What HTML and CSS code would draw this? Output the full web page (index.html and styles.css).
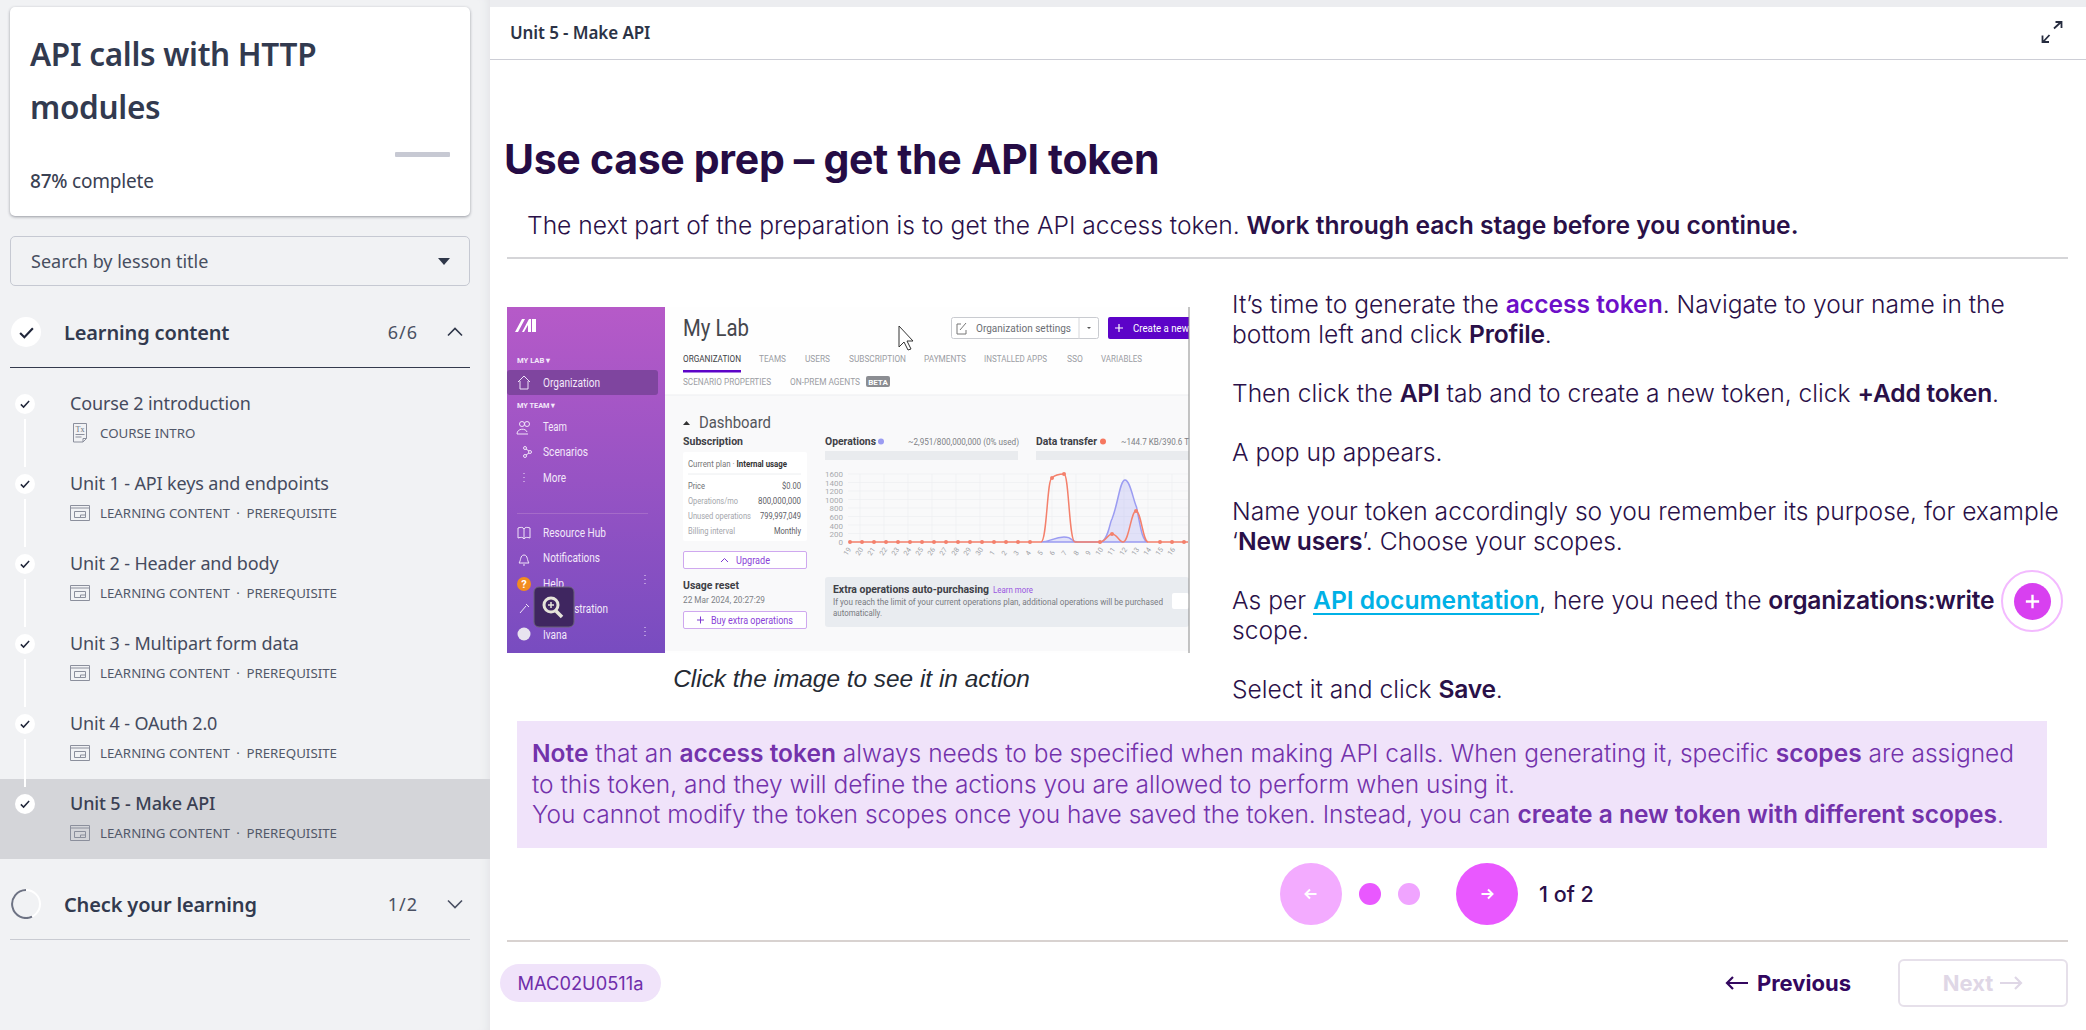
FILE: index.html
```html
<!DOCTYPE html>
<html lang="en">
<head>
<meta charset="utf-8">
<title>Use case prep - get the API token</title>
<link rel="stylesheet" href="styles.css">
</head>
<body>
<div class="app">
  <aside class="sidebar">
    <section class="course-card">
      <h1 class="course-title">API calls with HTTP modules</h1>
      <div class="progress"><span class="progress-rest"></span></div>
      <p class="progress-label"><b>87%</b> complete</p>
    </section>
    <div class="search"><span>Search by lesson title</span><i class="caret"></i></div>

    <div class="section-head">
      <span class="big-check"><svg viewBox="0 0 16 16" class="check-lg"><path d="M2 8.5l4 4 8-8.5"/></svg></span>
      <span class="section-title">Learning content</span>
      <span class="section-count">6/6</span>
      <svg class="chev" viewBox="0 0 16 10"><path d="M1 8.5l7-7 7 7"/></svg>
    </div>

    <ul class="lessons">
      <li class="lesson">
        <span class="small-check"><svg viewBox="0 0 16 16"><path d="M2.5 8.5l3.6 3.6 7.4-8"/></svg></span>
        <div class="lesson-body">
          <div class="lesson-title">Course 2 introduction</div>
          <div class="lesson-meta">
            <svg class="meta-icon doc" viewBox="0 0 20 20"><path d="M3.500 .500h13v15l-3.500 3.500h-9.500z M5.500 11.500h9 M5.500 14h6 M16.500 15.500h-3.500v3.500"/><text x="5.500" y="8.500" class="tx">Tx</text></svg>
            <span>COURSE INTRO</span>
          </div>
        </div>
      </li>
      <li class="lesson">
        <span class="small-check"><svg viewBox="0 0 16 16"><path d="M2.5 8.5l3.6 3.6 7.4-8"/></svg></span>
        <div class="lesson-body">
          <div class="lesson-title">Unit 1 - API keys and endpoints</div>
          <div class="lesson-meta">
            <svg class="meta-icon" viewBox="0 0 20 16"><path d="M.5.500h19v15h-19z M.5 3h19"/><path d="M4.500 6.500h11v6h-11z M10.500 12.500v-2.500h5"/></svg>
            <span>LEARNING CONTENT <i class="sep">·</i> PREREQUISITE</span>
          </div>
        </div>
      </li>
      <li class="lesson">
        <span class="small-check"><svg viewBox="0 0 16 16"><path d="M2.5 8.5l3.6 3.6 7.4-8"/></svg></span>
        <div class="lesson-body">
          <div class="lesson-title">Unit 2 - Header and body</div>
          <div class="lesson-meta">
            <svg class="meta-icon" viewBox="0 0 20 16"><path d="M.5.500h19v15h-19z M.5 3h19"/><path d="M4.500 6.500h11v6h-11z M10.500 12.500v-2.500h5"/></svg>
            <span>LEARNING CONTENT <i class="sep">·</i> PREREQUISITE</span>
          </div>
        </div>
      </li>
      <li class="lesson">
        <span class="small-check"><svg viewBox="0 0 16 16"><path d="M2.5 8.5l3.6 3.6 7.4-8"/></svg></span>
        <div class="lesson-body">
          <div class="lesson-title">Unit 3 - Multipart form data</div>
          <div class="lesson-meta">
            <svg class="meta-icon" viewBox="0 0 20 16"><path d="M.5.500h19v15h-19z M.5 3h19"/><path d="M4.500 6.500h11v6h-11z M10.500 12.500v-2.500h5"/></svg>
            <span>LEARNING CONTENT <i class="sep">·</i> PREREQUISITE</span>
          </div>
        </div>
      </li>
      <li class="lesson">
        <span class="small-check"><svg viewBox="0 0 16 16"><path d="M2.5 8.5l3.6 3.6 7.4-8"/></svg></span>
        <div class="lesson-body">
          <div class="lesson-title">Unit 4 - OAuth 2.0</div>
          <div class="lesson-meta">
            <svg class="meta-icon" viewBox="0 0 20 16"><path d="M.5.500h19v15h-19z M.5 3h19"/><path d="M4.500 6.500h11v6h-11z M10.500 12.500v-2.500h5"/></svg>
            <span>LEARNING CONTENT <i class="sep">·</i> PREREQUISITE</span>
          </div>
        </div>
      </li>
      <li class="lesson active">
        <span class="small-check"><svg viewBox="0 0 16 16"><path d="M2.5 8.5l3.6 3.6 7.4-8"/></svg></span>
        <div class="lesson-body">
          <div class="lesson-title">Unit 5 - Make API</div>
          <div class="lesson-meta">
            <svg class="meta-icon" viewBox="0 0 20 16"><path d="M.5.500h19v15h-19z M.5 3h19"/><path d="M4.500 6.500h11v6h-11z M10.500 12.500v-2.500h5"/></svg>
            <span>LEARNING CONTENT <i class="sep">·</i> PREREQUISITE</span>
          </div>
        </div>
      </li>
    </ul>

    <div class="section-head second">
      <svg class="spinner" viewBox="0 0 30 30"><circle cx="15" cy="15" r="14" class="spin-bg"/><path d="M21 27.700A14 14 0 1 1 15 1" class="spin-fg"/></svg>
      <span class="section-title">Check your learning</span>
      <span class="section-count">1/2</span>
      <svg class="chev" viewBox="0 0 16 10"><path d="M1 1.500l7 7 7-7"/></svg>
    </div>
  </aside>

  <main class="main">
    <header class="topbar">
      <span class="unit-name">Unit 5 - Make API</span>
      <svg class="expand" viewBox="0 0 22 22"><path d="M13 7.500L20 1 M14.500 1H20.500V7 M8.500 14L2 21 M1.500 14.500V21H8"/></svg>
    </header>

    <div class="content">
      <h2 class="page-title">Use case prep – get the API token</h2>
      <p class="intro">The next part of the preparation is to get the API access token. <strong>Work through each stage before you continue.</strong></p>
      <hr class="rule">

      <div class="columns">
        <figure class="figure">
          <svg class="shot" viewBox="507 308 684 346" role="img">
            <defs>
              <linearGradient id="side" x1="0" y1="0" x2="0" y2="1"><stop offset="0" stop-color="#b65ac8"/><stop offset="1" stop-color="#784cc0"/></linearGradient>
            </defs>
            <rect x="507" y="308" width="682" height="346" fill="#fefefe"/>
            <rect x="664" y="396" width="525" height="256" fill="#f9f9fa"/>
            <rect x="507" y="308" width="158" height="346" fill="url(#side)"/>
            <path d="M515 333l7-13h3l-7 13z M522 333l7-13h2v13h-3v-7l-4 7z M532 320h4v13h-4z" fill="#fff"/>
            <g class="s-side">
              <text x="517" y="364" class="s-cap" textLength="33" lengthAdjust="spacingAndGlyphs">MY LAB ▾</text>
              <rect x="507" y="371" width="151" height="25" rx="3" fill="#7f459f"/>
              <text x="543" y="388" textLength="57" lengthAdjust="spacingAndGlyphs">Organization</text>
              <text x="517" y="409" class="s-cap" textLength="38" lengthAdjust="spacingAndGlyphs">MY TEAM ▾</text>
              <text x="543" y="432" textLength="24" lengthAdjust="spacingAndGlyphs">Team</text>
              <text x="543" y="457" textLength="45" lengthAdjust="spacingAndGlyphs">Scenarios</text>
              <text x="543" y="483" textLength="23" lengthAdjust="spacingAndGlyphs">More</text>
              <text x="543" y="538" textLength="63" lengthAdjust="spacingAndGlyphs">Resource Hub</text>
              <text x="543" y="563" textLength="57" lengthAdjust="spacingAndGlyphs">Notifications</text>
              <text x="543" y="589" textLength="21" lengthAdjust="spacingAndGlyphs">Help</text>
              <text x="543" y="614" textLength="65" lengthAdjust="spacingAndGlyphs">Administration</text>
              <text x="543" y="640" textLength="24" lengthAdjust="spacingAndGlyphs">Ivana</text>
            </g>
            <g class="s-ic">
              <path d="M518 383l6-6 6 6M520 382v8h8v-8"/>
              <circle cx="522" cy="425" r="2.500"/><circle cx="527" cy="425" r="2.500"/><path d="M517 435c0-6 9-6 10-2M528 435h-11"/>
              <circle cx="525" cy="449" r="1.500"/><circle cx="530" cy="453" r="1.500"/><circle cx="525" cy="457" r="1.500"/><path d="M526 450l3 2M526 456l3-2"/>
              <path d="M524 474v1M524 478v1M524 482v1"/>
              <path d="M518 529c3-1 5-1 6 1 1-2 3-2 6-1v10c-3-1-5-1-6 1-1-2-3-2-6-1zM524 530v10"/>
              <path d="M519 564c2-2 1-8 5-8s3 6 5 8zM523 566h2"/>
              <path d="M520 614l6-7M526 605l3 3"/>
              <path d="M645 576v1M645 580v1M645 584v1M645 628v1M645 632v1M645 636v1"/>
            </g>
            <rect x="517" y="514" width="131" height="1" fill="#a56bc9"/>
            <circle cx="524" cy="585" r="7" fill="#f28c1f"/><text x="524" y="589" class="s-q">?</text>
            <circle cx="524" cy="635" r="6.500" fill="#e8e3ef"/>
            <rect x="534" y="588" width="40" height="40" rx="5" fill="#3f2660" stroke="#6a6378"/>
            <circle cx="551" cy="606" r="7" fill="none" stroke="#e6e4da" stroke-width="3"/>
            <path d="M556 612l6 6" stroke="#e6e4da" stroke-width="3.500"/>
            <path d="M548 606h6M551 603v6" stroke="#e6e4da" stroke-width="1.500"/>

            <text x="683" y="337" class="s-h1" textLength="66" lengthAdjust="spacingAndGlyphs">My Lab</text>
            <path d="M899 327v21l5-5 4 8 3-1-4-8h6z" fill="#fff" stroke="#333" stroke-width="1"/>
            <rect x="951.500" y="318.500" width="147" height="21" rx="2" fill="#fff" stroke="#c9cbd0"/>
            <path d="M1079 319v21" stroke="#d5d6da"/>
            <path d="M1087 328l2 2 2-2z" fill="#555"/>
            <path d="M961 325h-4v10h9v-4M960 331l6-7" fill="none" stroke="#777"/>
            <text x="976" y="333" class="s-btn" textLength="95" lengthAdjust="spacingAndGlyphs">Organization settings</text>
            <path d="M1108 320a2 2 0 0 1 2-2h79v22h-79a2 2 0 0 1-2-2z" fill="#5c03c8"/>
            <path d="M1115 329h8M1119 325v8" stroke="#fff" stroke-width="1.200"/>
            <text x="1133" y="333" class="s-btn white" textLength="56" lengthAdjust="spacingAndGlyphs">Create a new</text>

            <g class="s-tab">
              <text x="683" y="363" class="dark" textLength="58" lengthAdjust="spacingAndGlyphs">ORGANIZATION</text>
              <text x="759" y="363" textLength="27" lengthAdjust="spacingAndGlyphs">TEAMS</text>
              <text x="805" y="363" textLength="25" lengthAdjust="spacingAndGlyphs">USERS</text>
              <text x="849" y="363" textLength="57" lengthAdjust="spacingAndGlyphs">SUBSCRIPTION</text>
              <text x="924" y="363" textLength="42" lengthAdjust="spacingAndGlyphs">PAYMENTS</text>
              <text x="984" y="363" textLength="63" lengthAdjust="spacingAndGlyphs">INSTALLED APPS</text>
              <text x="1067" y="363" textLength="16" lengthAdjust="spacingAndGlyphs">SSO</text>
              <text x="1101" y="363" textLength="41" lengthAdjust="spacingAndGlyphs">VARIABLES</text>
              <text x="683" y="386" textLength="88" lengthAdjust="spacingAndGlyphs">SCENARIO PROPERTIES</text>
              <text x="790" y="386" textLength="70" lengthAdjust="spacingAndGlyphs">ON-PREM AGENTS</text>
            </g>
            <rect x="683" y="371" width="58" height="2.500" fill="#5c03c8"/>
            <rect x="866" y="377" width="24" height="11" rx="2" fill="#8b8d92"/>
            <text x="878" y="386" class="s-beta">BETA</text>
            <path d="M665 396h524" stroke="#eeeff1"/>

            <path d="M683 426l3.500-4 3.500 4z" fill="#333"/>
            <text x="699" y="429" class="s-h2" textLength="72" lengthAdjust="spacingAndGlyphs">Dashboard</text>

            <g class="s-b">
              <text x="683" y="446" textLength="60" lengthAdjust="spacingAndGlyphs">Subscription</text>
              <text x="825" y="446" textLength="51" lengthAdjust="spacingAndGlyphs">Operations</text>
              <text x="1036" y="446" textLength="61" lengthAdjust="spacingAndGlyphs">Data transfer</text>
              <text x="683" y="590" textLength="56" lengthAdjust="spacingAndGlyphs">Usage reset</text>
            </g>
            <circle cx="881" cy="442.500" r="3" fill="#9b9cf2"/>
            <circle cx="1103" cy="442.500" r="3" fill="#f6775f"/>
            <text x="908" y="446" class="s-t" textLength="111" lengthAdjust="spacingAndGlyphs">~2,951/800,000,000 (0% used)</text>
            <text x="1121" y="446" class="s-t" textLength="68" lengthAdjust="spacingAndGlyphs">~144.7 KB/390.6 T</text>
            <rect x="825" y="452" width="193" height="9" fill="#e9ebee"/>
            <rect x="1036" y="452" width="153" height="9" fill="#e9ebee"/>

            <rect x="683" y="453" width="124" height="89" rx="2" fill="#fff"/>
            <text x="688" y="468" class="s-t8" textLength="99" lengthAdjust="spacingAndGlyphs">Current plan · <tspan class="bold">Internal usage</tspan></text>
            <path d="M688 475h113" stroke="#eceef0"/>
            <g class="s-t8 dim">
              <text x="688" y="490" class="darker" textLength="17" lengthAdjust="spacingAndGlyphs">Price</text>
              <text x="688" y="505" textLength="50" lengthAdjust="spacingAndGlyphs">Operations/mo</text>
              <text x="688" y="520" textLength="63" lengthAdjust="spacingAndGlyphs">Unused operations</text>
              <text x="688" y="535" textLength="47" lengthAdjust="spacingAndGlyphs">Billing interval</text>
            </g>
            <g class="s-t8 end">
              <text x="801" y="490" textLength="19" lengthAdjust="spacingAndGlyphs">$0.00</text>
              <text x="801" y="505" textLength="43" lengthAdjust="spacingAndGlyphs">800,000,000</text>
              <text x="801" y="520" textLength="41" lengthAdjust="spacingAndGlyphs">799,997,049</text>
              <text x="801" y="535" textLength="27" lengthAdjust="spacingAndGlyphs">Monthly</text>
            </g>
            <rect x="683.500" y="552.500" width="123" height="17" rx="1.500" fill="#fff" stroke="#cfa8ef"/>
            <path d="M721 563l3.500-3.500 3.500 3.500" fill="none" stroke="#7d3ad0"/>
            <text x="736" y="565" class="s-p" textLength="34" lengthAdjust="spacingAndGlyphs">Upgrade</text>
            <text x="683" y="604" class="s-t" textLength="82" lengthAdjust="spacingAndGlyphs">22 Mar 2024, 20:27:29</text>
            <rect x="683.500" y="612.500" width="123" height="17" rx="1.500" fill="#fff" stroke="#cfa8ef"/>
            <path d="M697 621h7M700.500 617.500v7" stroke="#7d3ad0"/>
            <text x="711" y="625" class="s-p" textLength="82" lengthAdjust="spacingAndGlyphs">Buy extra operations</text>

            <g class="s-axis">
              <text x="843" y="478">1600</text><text x="843" y="487">1400</text><text x="843" y="495">1200</text><text x="843" y="504">1000</text><text x="843" y="512">800</text><text x="843" y="521">600</text><text x="843" y="530">400</text><text x="843" y="538">200</text><text x="843" y="546">0</text>
            </g>
            <path class="s-grid" d="M848 475h340M848 483.500h340M848 492h340M848 500.500h340M848 509h340M848 517.500h340M848 526h340M848 534.500h340M848 543h340M860 475v68M884 475v68M908 475v68M932 475v68M956 475v68M980 475v68M1004 475v68M1028 475v68M1052 475v68M1076 475v68M1100 475v68M1124 475v68M1148 475v68M1172 475v68"/>
            <path d="M1041 543C1050 543 1054 538 1064 538S1070 543 1078 543H1100C1108 543 1110 522 1112 520 1118 505 1120 481 1125 481 1130 481 1133 500 1136.500 508 1140 525 1142 543 1148 543Z" fill="#9b9cf2" fill-opacity=".25" stroke="#9b9cf2" stroke-width="1.500"/>
            <path d="M850 543H1041C1047 543 1047 479 1052 479 1056 475 1060 475 1064 475 1069 475 1069 543 1075 543H1100C1105 543 1108 535 1112 535 1117 535 1119 543 1123 543 1129 543 1131 512 1136 512 1141 512 1143 543 1148 543H1188" fill="none" stroke="#f4806c" stroke-width="1.500"/>
            <path class="s-dots" d="M850 543h.01M862 543h.01M874 543h.01M886 543h.01M898 543h.01M910 543h.01M922 543h.01M934 543h.01M946 543h.01M958 543h.01M970 543h.01M982 543h.01M994 543h.01M1006 543h.01M1018 543h.01M1030 543h.01M1052 479h.01M1064 475h.01M1100 543h.01M1112 535h.01M1136 512h.01M1160 543h.01M1172 543h.01M1184 543h.01"/>
            <g class="s-x">
              <text transform="translate(847 557) rotate(-55)">19</text><text transform="translate(859 557) rotate(-55)">20</text><text transform="translate(871 557) rotate(-55)">21</text><text transform="translate(883 557) rotate(-55)">22</text><text transform="translate(895 557) rotate(-55)">23</text><text transform="translate(907 557) rotate(-55)">24</text><text transform="translate(919 557) rotate(-55)">25</text><text transform="translate(931 557) rotate(-55)">26</text><text transform="translate(943 557) rotate(-55)">27</text><text transform="translate(955 557) rotate(-55)">28</text><text transform="translate(967 557) rotate(-55)">29</text><text transform="translate(979 557) rotate(-55)">30</text><text transform="translate(993 557) rotate(-55)">1</text><text transform="translate(1005 557) rotate(-55)">2</text><text transform="translate(1017 557) rotate(-55)">3</text><text transform="translate(1029 557) rotate(-55)">4</text><text transform="translate(1041 557) rotate(-55)">5</text><text transform="translate(1053 557) rotate(-55)">6</text><text transform="translate(1065 557) rotate(-55)">7</text><text transform="translate(1077 557) rotate(-55)">8</text><text transform="translate(1089 557) rotate(-55)">9</text><text transform="translate(1099 557) rotate(-55)">10</text><text transform="translate(1111 557) rotate(-55)">11</text><text transform="translate(1123 557) rotate(-55)">12</text><text transform="translate(1135 557) rotate(-55)">13</text><text transform="translate(1147 557) rotate(-55)">14</text><text transform="translate(1159 557) rotate(-55)">15</text><text transform="translate(1171 557) rotate(-55)">16</text>
            </g>

            <rect x="825" y="578" width="364" height="50" rx="3" fill="#e9ecf0"/>
            <g class="s-b"><text x="833" y="594" textLength="156" lengthAdjust="spacingAndGlyphs">Extra operations auto-purchasing</text></g>
            <text x="993" y="594" class="s-link" textLength="40" lengthAdjust="spacingAndGlyphs">Learn more</text>
            <text x="833" y="606" class="s-t9" textLength="330" lengthAdjust="spacingAndGlyphs">If you reach the limit of your current operations plan, additional operations will be purchased</text>
            <text x="833" y="617" class="s-t9" textLength="49" lengthAdjust="spacingAndGlyphs">automatically.</text>
            <rect x="1172" y="594" width="17" height="16" rx="2" fill="#fff"/>
            <path d="M1189 308v346" stroke="#8a8a8a" stroke-width="1"/>
          </svg>
          <figcaption class="caption">Click the image to see it in action</figcaption>
        </figure>

        <div class="steps">
          <p>It’s time to generate the <a class="term">access token</a>. Navigate to your name in the bottom left and click <strong>Profile</strong>.</p>
          <p>Then click the <strong>API</strong> tab and to create a new token, click <strong>+Add token</strong>.</p>
          <p>A pop up appears.</p>
          <p>Name your token accordingly so you remember its purpose, for example ‘<strong>New users</strong>’. Choose your scopes.</p>
          <p>As per <a class="doc-link">API documentation</a>, here you need the <strong>organizations:write</strong> scope.</p>
          <p>Select it and click <strong>Save</strong>.</p>
          <button class="hotspot" aria-label="More"><svg viewBox="0 0 20 20"><path d="M10 3v14M3 10h14"/></svg></button>
        </div>
      </div>

      <aside class="note">
        <p><strong>Note</strong> that an <strong>access token</strong> always needs to be specified when making API calls. When generating it, specific <strong>scopes</strong> are assigned to this token, and they will define the actions you are allowed to perform when using it.<br>You cannot modify the token scopes once you have saved the token. Instead, you can <strong>create a new token with different scopes</strong>.</p>
      </aside>

      <nav class="pager">
        <span class="round faded"><svg viewBox="0 0 16 16"><path d="M13.500 8h-11M7 3.500L2.500 8 7 12.500"/></svg></span>
        <span class="dot on"></span>
        <span class="dot"></span>
        <span class="round"><svg viewBox="0 0 16 16"><path d="M2.500 8h11M9 3.500L13.500 8 9 12.500"/></svg></span>
        <span class="page-count">1 of 2</span>
      </nav>
      <hr class="rule lower">

      <footer class="foot">
        <span class="code">MAC02U0511a</span>
        <a class="prev"><svg class="arrow" viewBox="0 0 24 16"><path d="M23 8H2M8 2L2 8l6 6"/></svg>Previous</a>
        <a class="next">Next<svg class="arrow" viewBox="0 0 24 16"><path d="M1 8h21M16 2l6 6-6 6"/></svg></a>
      </footer>
    </div>
  </main>
</div>
</body>
</html>
```
FILE: styles.css
```css
* { box-sizing: border-box; }
html, body { margin: 0; height: 100%; }
body { background: #ecedf0; overflow: hidden; font-family: "Inter", "Liberation Sans", sans-serif; }
.app { display: flex; height: 1030px; width: 2086px; }

/* Sidebar */
.sidebar {
  width: 490px; flex: none; padding-top: 7px; background: #f1f2f4;
  font-family: "Noto Sans", "Liberation Sans", sans-serif; color: #2f3749;
  box-shadow: inset -10px 0 10px -8px #e2e3e6;
}
.course-card {
  margin: 0 10px 0; width: 460px; height: 209px; padding: 20px 20px 0;
  background: #fff; border-radius: 5px; box-shadow: 0 1px 3px rgba(40, 44, 60, .45);
}
.course-title { margin: 0; max-width: 340px; font-size: 31.500px; line-height: 53px; font-weight: 600; color: #323a4f; letter-spacing: -.3px; }
.progress { margin-top: 19px; height: 5px; display: flex; justify-content: flex-end; }
.progress-rest { width: 55px; height: 5px; background: #c7c9d3; border-radius: 1px; }
.progress-label { margin: 12px 0 0; font-size: 19px; line-height: 24px; color: #3a4153; letter-spacing: -.2px; }
.progress-label b { font-weight: 500; }

.search {
  margin: 20px 10px 0; width: 460px; height: 50px; padding: 0 19px 0 20px;
  display: flex; align-items: center; justify-content: space-between;
  border: 1px solid #c6c9d2; border-radius: 5px; font-size: 18px; color: #474e60;
}
.caret { width: 0; height: 0; border-left: 6px solid transparent; border-right: 6px solid transparent; border-top: 7px solid #2f3749; }

.section-head {
  display: flex; align-items: center; margin: 24px 20px 0 10px; height: 58px; padding-bottom: 13px;
  border-bottom: 1px solid #343a4d;
}
.section-head.second { margin-top: 15px; height: 66px; padding-bottom: 5px; border-bottom-color: #c9cbd2; }
.big-check { width: 30px; height: 30px; margin-left: 1px; border-radius: 50%; background: #fff; display: flex; align-items: center; justify-content: center; flex: none; }
.check-lg { width: 17px; height: 17px; fill: none; stroke: #20263a; stroke-width: 2; }
.spinner { width: 30px; height: 30px; margin-left: 1px; flex: none; fill: none; }
.spin-bg { stroke: #fff; stroke-width: 2; }
.spin-fg { stroke: #6d7283; stroke-width: 2; }
.section-title { margin-left: 23px; font-size: 20px; font-weight: 600; color: #323a4f; flex: 1; letter-spacing: -.15px; }
.section-count { font-size: 18px; color: #4a5062; letter-spacing: 1px; }
.chev { width: 16px; height: 10px; margin: 0 7px 0 29px; fill: none; stroke: #2f3749; stroke-width: 1.600; }
.second .chev { stroke: #4a5062; }

.lessons { list-style: none; margin: 11px 0 0; padding: 0; }
.lesson { position: relative; display: flex; height: 80px; padding: 14px 0 0 15px; }
.lesson.active { background: #d4d5d9; }
.lesson + .lesson::before {
  content: ""; position: absolute; left: 24px; top: -40px; width: 2px; height: 48px; background: #fff;
}
.small-check { width: 20px; height: 20px; margin-top: 1px; border-radius: 50%; background: #fff; display: flex; align-items: center; justify-content: center; flex: none; position: relative; z-index: 1; }
.small-check svg { width: 12px; height: 12px; fill: none; stroke: #20263a; stroke-width: 2; }
.lesson-body { margin-left: 35px; }
.lesson-title { font-size: 18px; line-height: 20px; color: #454b5e; letter-spacing: -.13px; }
.active .lesson-title { font-weight: 500; color: #3a4053; }
.lesson-meta { display: flex; align-items: center; margin-top: 12px; height: 16px; gap: 10px; font-size: 13.300px; color: #525869; }
.sep { font-style: normal; margin: 0 3px; }
.meta-icon { width: 20px; height: 16px; fill: none; stroke: #8b8f9c; stroke-width: 1; flex: none; }
.meta-icon.doc { height: 20px; }
.tx { font-size: 8px; fill: #6a7080; stroke: none; font-family: "Liberation Serif", serif; }

/* Main */
.main { flex: 1; margin-top: 7px; background: #fff; min-width: 0; }
.topbar {
  height: 53px; padding: 0 23px 2px 20px; display: flex; align-items: center; justify-content: space-between;
  border-bottom: 1px solid #cdced6;
}
.unit-name { font-family: "Noto Sans", sans-serif; font-size: 17px; font-weight: 600; color: #2c3346; letter-spacing: -.1px; }
.expand { width: 22px; height: 22px; fill: none; stroke: #262c3f; stroke-width: 1.800; }

.content { padding: 0 18px 0 14px; }
.page-title { margin: 75px 0 0; font-size: 41px; line-height: 48px; font-weight: 700; color: #250c45; letter-spacing: -.3px; }
.intro { margin: 26px 0 0 23px; font-size: 24.600px; line-height: 32px; font-weight: 300; color: #2a1048; }
.intro strong, .steps strong { font-weight: 600; }
.steps strong { letter-spacing: -.2px; }
.rule { margin: 16px 0 0 3px; border: 0; border-top: 2px solid #d5d5d8; }

.columns { position: relative; display: flex; margin-top: 28px; margin-left: 3px; height: 434px; }
.figure { margin: 0; width: 684px; flex: none; padding-top: 20px; }
.shot { display: block; width: 684px; height: 346px; }
.caption { margin-top: 10px; padding-left: 5px; text-align: center; font-family: "Liberation Sans", sans-serif; font-style: italic; font-size: 24.400px; line-height: 32px; color: #252a33; }
.steps { position: relative; margin-left: 41px; padding-top: 2px; width: 836px; font-size: 24.600px; line-height: 30px; font-weight: 300; color: #2a1048; }
.steps p { margin: 0 0 29px; }
.term { color: #6d0fc8; font-weight: 600; }
.doc-link { color: #00b1e6; font-weight: 600; text-decoration: underline; text-underline-offset: 4px; }
.hotspot {
  position: absolute; left: 769px; top: 283px; width: 62px; height: 62px; padding: 0; border-radius: 50%;
  border: 2px solid #f3baff; background: #fff; display: flex; align-items: center; justify-content: center;
}
.hotspot svg { width: 37px; height: 37px; padding: 9px; border-radius: 50%; background: #d840f0; fill: none; stroke: #fff; stroke-width: 2.500; }

.note { margin: 0 0 0 13px; width: 1530px; height: 127px; padding: 17px 15px; background: #f0e3fa; color: #7332ab; font-size: 24.500px; line-height: 30.500px; font-weight: 300; }
.note p { margin: 0; }
.note strong { font-weight: 600; }

.pager { display: flex; align-items: center; height: 62px; margin: 15px 0 0 776px; }
.round { width: 62px; height: 62px; border-radius: 50%; background: #e958ff; display: flex; align-items: center; justify-content: center; }
.round.faded { background: #f3abff; }
.round svg { width: 16px; height: 16px; fill: none; stroke: #fff; stroke-width: 2; }
.dot { width: 22px; height: 22px; border-radius: 50%; background: #f0a4ff; margin-left: 17px; }
.dot.on { background: #e958ff; margin-left: 17px; }
.dot + .round { margin-left: 36px; }
.page-count { margin-left: 21px; font-size: 21.500px; font-weight: 500; color: #2a1048; }
.rule.lower { margin-top: 15px; border-top-color: #d8d2d0; }

.foot { display: flex; align-items: center; height: 48px; margin-top: 17px; margin-left: -4px; }
.code { height: 38px; width: 161px; border-radius: 19px; background: #f0e3fa; color: #6f2eaa; font-size: 18.300px; display: flex; align-items: center; justify-content: center; }
.prev { margin-left: auto; display: flex; align-items: center; gap: 8px; font-size: 22px; font-weight: 700; color: #33075f; }
.next { margin-left: 47px; width: 170px; height: 48px; border: 2px solid #e6e0ea; border-radius: 6px; display: flex; align-items: center; justify-content: center; gap: 6px; font-size: 22px; font-weight: 700; color: #dfd7e6; }
.arrow { width: 24px; height: 16px; fill: none; stroke: currentColor; stroke-width: 2.200; }

/* Animated screenshot inside the figure */
.shot text { font-family: "Roboto", "Liberation Sans", sans-serif; }
.s-side text { font-size: 12px; fill: #f3e8fa; }
.s-side .s-cap { font-size: 8px; font-weight: 700; }
.s-ic { fill: none; stroke: #efe3f8; stroke-width: 1; }
.s-q { font-size: 11px; font-weight: 700; fill: #fff; text-anchor: middle; }
.s-h1 { font-size: 23px; fill: #45474d; }
.s-h2 { font-size: 17px; fill: #53565c; }
.s-btn { font-size: 11px; fill: #6c6e74; }
.s-btn.white { fill: #fff; }
.s-tab text { font-size: 9px; fill: #9b9da3; }
.s-tab .dark { fill: #3d3f45; }
.s-beta { font-size: 8px; font-weight: 700; fill: #fff; text-anchor: middle; }
.s-b text { font-size: 11.500px; font-weight: 700; fill: #3e4046; }
.s-t { font-size: 9.500px; fill: #7d7f85; }
.s-t8 { font-size: 8.500px; fill: #777; }
.s-t8 .bold { font-weight: 700; fill: #333; }
.dim text { fill: #a4a6ab; }
.dim .darker { fill: #6d6f75; }
.end text { text-anchor: end; fill: #5e6066; }
.s-p { font-size: 10.500px; fill: #8a3fd8; }
.s-axis text { font-size: 8px; fill: #a8aaae; text-anchor: end; }
.s-grid { stroke: #eeeff1; stroke-width: .7; }
.s-dots { stroke: #f4806c; stroke-width: 4; stroke-linecap: round; }
.s-x text { font-size: 7px; fill: #a0a2a7; }
.s-link { font-size: 9px; fill: #9a55e0; }
.s-t9 { font-size: 9px; fill: #787a80; }
```
